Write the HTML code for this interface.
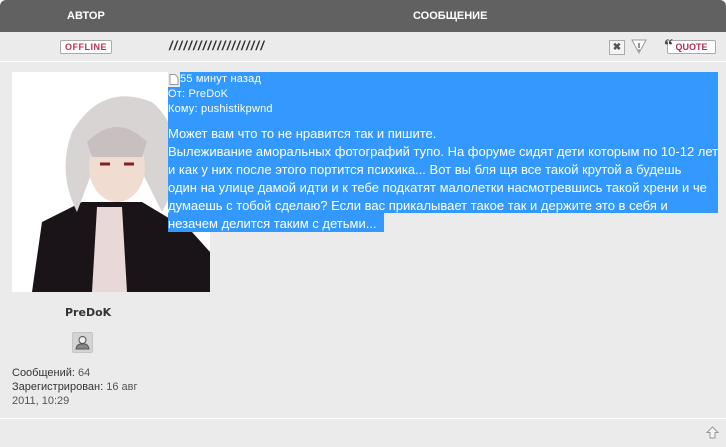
<!DOCTYPE html>
<html><head><meta charset="utf-8"><style>
body{margin:0;width:726px;height:447px;background:#fff;font-family:"Liberation Sans",sans-serif;position:relative;overflow:hidden}
.a{position:absolute}
.hdr{left:0;top:0;width:726px;height:32px;background:#616161;border-radius:6px 6px 0 0}
.hdr span{position:absolute;top:10px;color:#fff;font:bold 11px "Liberation Sans",sans-serif}
.bg{background:#ebebeb}
.t{color:#fff;font-size:11px;line-height:15px;white-space:nowrap;letter-spacing:.2px}
.b{color:#fff;font-size:13px;line-height:18px;white-space:nowrap;letter-spacing:0}
.g{font-size:11px;color:#333;line-height:14px}
.g i{font-style:normal;color:#555}
</style></head><body>
<div class="a hdr"><span style="left:67px">АВТОР</span><span style="left:413px">СООБЩЕНИЕ</span></div>
<div class="a bg" style="left:0;top:32px;width:726px;height:29px"></div>
<div class="a" style="left:0;top:61px;width:726px;height:1px;background:#fff"></div>
<div class="a bg" style="left:0;top:62px;width:726px;height:356px"></div>
<div class="a" style="left:0;top:418px;width:726px;height:1px;background:#fff"></div>
<div class="a bg" style="left:0;top:419px;width:726px;height:28px"></div>
<div class="a" style="left:60px;top:40px;width:50px;height:12px;border:1px solid #aaa;border-radius:2px;background:#fff;color:#c03050;font:bold 9px 'Liberation Sans',sans-serif;text-align:center;line-height:12px;letter-spacing:.5px">OFFLINE</div>
<div class="a" style="left:169px;top:38px;font:italic bold 13px 'Liberation Sans',sans-serif;color:#333;letter-spacing:1.2px">////////////////////</div>
<div class="a" style="left:609px;top:40px;width:14px;height:13px;border:1px solid #aaa;background:#f4f4f4;font:bold 10px sans-serif;color:#555;text-align:center;line-height:13px">✖</div>
<svg class="a" style="left:631px;top:39px" width="16" height="15"><path d="M1 1H15L8 14Z" fill="#fff" stroke="#999"/><path d="M8 4V9M8 10.5V12" stroke="#777" stroke-width="1.6"/></svg>
<div class="a" style="left:667px;top:40px;width:47px;height:12px;border:1px solid #aaa;border-radius:2px;background:#fff;color:#b03050;font:bold 9px 'Liberation Sans',sans-serif;text-align:center;line-height:12px">QUOTE</div>
<div class="a" style="left:664px;top:36px;font:bold 18px/18px 'Liberation Serif',serif;color:#444">“</div>
<svg class="a" style="left:12px;top:72px" width="198" height="220"><rect width="198" height="220" fill="#fff"/><path d="M20 220L30 150L70 130L130 130L180 160L198 180L198 220Z" fill="#1a1418"/><path d="M85 135L110 135L115 220L80 220Z" fill="#e8d8d8"/><path d="M60 60Q90 10 140 30Q175 60 160 120L150 140L130 100L80 100L65 140Q45 100 60 60Z" fill="#d8d4d4"/><ellipse cx="105" cy="95" rx="28" ry="35" fill="#f0dcd0"/><path d="M75 70Q105 40 135 70L130 85L80 85Z" fill="#c8c0c0"/><path d="M88 92h10M112 92h10" stroke="#802020" stroke-width="3"/></svg>
<div class="a" style="left:168px;top:72px;width:550px;height:141px;background:#3399ff"></div>
<div class="a bg" style="left:168px;top:72px;width:12px;height:15px"></div>
<div class="a" style="left:168px;top:213px;width:216px;height:19px;background:#3399ff"></div>
<svg class="a" style="left:169px;top:74px" width="10" height="11"><path d="M1 .5H6L9 3.5V10.5H1Z" fill="#fff" stroke="#999"/></svg>
<div class="a t" style="left:180px;top:72px">55 минут назад</div>
<div class="a t" style="left:168px;top:87px">От: PreDoK</div>
<div class="a t" style="left:168px;top:102px">Кому: pushistikpwnd</div>
<div class="a b" style="left:168px;top:125px">Может вам что то не нравится так и пишите.<br>Вылеживание аморальных фотографий тупо. На форуме сидят дети которым по 10-12 лет<br>и как у них после этого портится психика... Вот вы бля щя все такой крутой а будешь<br>один на улице дамой идти и к тебе подкатят малолетки насмотревшись такой хрени и че<br>думаешь с тобой сделаю? Если вас прикалывает такое так и держите это в себя и<br>незачем делится таким с детьми...</div>
<div class="a" style="left:65px;top:306px;font:bold 11px 'DejaVu Sans',sans-serif;color:#333">PreDoK</div>
<div class="a" style="left:72px;top:332px;width:19px;height:19px;background:#d4d4d4;border-radius:2px;border:1px solid #c4c4c4"><svg width="19" height="19"><circle cx="9.5" cy="7" r="3.5" fill="#eee" stroke="#555"/><path d="M3 16Q4 10 9.5 11Q15 10 16 16Z" fill="#888" stroke="#555"/></svg></div>
<div class="a g" style="left:12px;top:366px">Сообщений: <i>64</i><br>Зарегистрирован: <i>16 авг<br>2011, 10:29</i></div>
<svg class="a" style="left:706px;top:426px" width="13" height="13"><path d="M6.5 1L12 6.5H9V12H4V6.5H1Z" fill="#f4f4f4" stroke="#999"/></svg>
</body></html>
